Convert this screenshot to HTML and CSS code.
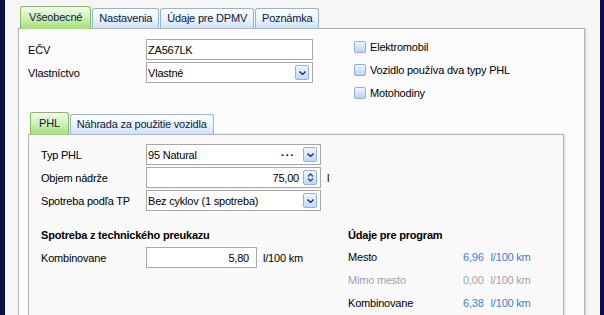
FILE: index.html
```html
<!DOCTYPE html>
<html lang="sk">
<head>
    <meta charset="UTF-8">
    <title>Vozidlo</title>
    <link rel="stylesheet" href="styles.css">
</head>
<body>
    <div class="screen">
        <div class="edge"></div>

        <div class="window">
            <!-- Main tabs -->
            <div class="tabs">
                <div class="tab active">Všeobecné</div>
                <div class="tab">Nastavenia</div>
                <div class="tab">Údaje pre DPMV</div>
                <div class="tab">Poznámka</div>
            </div>

            <div class="panel">
                <div class="top">
                    <div class="fields">
                        <div class="row">
                            <span class="label">EČV</span>
                            <div class="input wide">ZA567LK</div>
                        </div>
                        <div class="row">
                            <span class="label">Vlastníctvo</span>
                            <div class="input wide">
                                <span class="value">Vlastné</span>
                                <span class="btn"><svg width="7" height="4" viewBox="0 0 7 4"><path d="M0.5 0.5 L3.5 3.5 L6.5 0.5" fill="none" stroke="#24487f" stroke-width="1.6"/></svg></span>
                            </div>
                        </div>
                    </div>

                    <div class="checks">
                        <div class="check"><span class="box"></span>Elektromobil</div>
                        <div class="check"><span class="box"></span>Vozidlo používa dva typy PHL</div>
                        <div class="check"><span class="box"></span>Motohodiny</div>
                    </div>
                </div>

                <!-- Inner tabs -->
                <div class="subtabs">
                    <div class="tab active">PHL</div>
                    <div class="tab">Náhrada za použitie vozidla</div>
                </div>

                <div class="subpanel">
                    <div class="row">
                        <span class="label">Typ PHL</span>
                        <div class="input fuel">
                            <span class="value">95 Natural</span>
                            <span class="dots">···</span>
                            <span class="btn"><svg width="7" height="4" viewBox="0 0 7 4"><path d="M0.5 0.5 L3.5 3.5 L6.5 0.5" fill="none" stroke="#24487f" stroke-width="1.6"/></svg></span>
                        </div>
                    </div>
                    <div class="row">
                        <span class="label">Objem nádrže</span>
                        <div class="input fuel number">
                            <span class="value">75,00</span>
                            <span class="btn spin"><svg width="7" height="9" viewBox="0 0 7 9"><path d="M1 3.5 L3.5 1 L6 3.5 M1 5.5 L3.5 8 L6 5.5" fill="none" stroke="#24487f" stroke-width="1.4"/></svg></span>
                        </div>
                        <span class="unit">l</span>
                    </div>
                    <div class="row">
                        <span class="label">Spotreba podľa TP</span>
                        <div class="input fuel">
                            <span class="value">Bez cyklov (1 spotreba)</span>
                            <span class="btn"><svg width="7" height="4" viewBox="0 0 7 4"><path d="M0.5 0.5 L3.5 3.5 L6.5 0.5" fill="none" stroke="#24487f" stroke-width="1.6"/></svg></span>
                        </div>
                    </div>

                    <div class="consumption">
                        <div class="col-tp">
                            <h3>Spotreba z technického preukazu</h3>
                            <div class="row">
                                <span class="label">Kombinovane</span>
                                <div class="input short number"><span class="value">5,80</span></div>
                                <span class="unit">l/100 km</span>
                            </div>
                        </div>

                        <div class="col-program">
                            <h3>Údaje pre program</h3>
                            <div class="stats">
                                <span>Mesto</span><span class="num">6,96</span><span class="num">l/100 km</span>
                                <span class="off">Mimo mesto</span><span class="off">0,00</span><span class="off">l/100 km</span>
                                <span>Kombinovane</span><span class="num">6,38</span><span class="num">l/100 km</span>
                            </div>
                        </div>
                    </div>
                </div>
            </div>
        </div>

        <div class="edge right"></div>
    </div>
</body>
</html>
```

FILE: styles.css
```css
/* Page */
body {
    margin: 0;
    font-family: "Liberation Sans", Arial, sans-serif;
    font-size: 11px;
    letter-spacing: -0.2px;
    color: #000;
}

.screen {
    display: flex;
    height: 315px;
    overflow: hidden;
}

.edge {
    width: 5px;
    background: #0b0d48;
}

.edge.right {
    width: 4px;
}

.window {
    flex: 1;
    background: #f6f6f6;
    padding: 6px 0 0 13px;
}

/* Tabs */
.tabs,
.subtabs {
    display: flex;
    align-items: flex-end;
    height: 22px;
    padding-left: 2px;
}

.tab {
    height: 19px;
    line-height: 19px;
    padding: 0 6px;
    margin-right: 1px;
    border: 1px solid #93b5dc;
    border-bottom: none;
    border-radius: 3px 3px 0 0;
    background: linear-gradient(#fdfeff, #e9f2fc 55%, #cfe2f7);
    color: #0c1a3a;
}

.tab.active {
    position: relative;
    z-index: 1;
    height: 22px;
    line-height: 21px;
    margin-bottom: -1px;
    padding: 0 8px;
    border-color: #82bf56;
    background: linear-gradient(#f4fbee, #d4f0bd 45%, #a4de76);
}

/* Panels */
.panel {
    width: 567px;
    height: 300px;
    border: 1px solid #b4b4b4;
    background: #fcfcfc;
    box-shadow: 1px 1px 2px rgba(0, 0, 0, 0.18);
    padding: 10px 0 0 9px;
    box-sizing: border-box;
}

.top {
    display: flex;
}

.row {
    display: flex;
    align-items: center;
    height: 21px;
    margin-bottom: 2px;
}

.fields .label {
    width: 118px;
}

.input {
    display: flex;
    align-items: center;
    height: 21px;
    box-sizing: border-box;
    border: 1px solid #a7a7a7;
    background: #fff;
    padding: 0 3px 0 1px;
}

.input .value {
    flex: 1;
}

.input.number .value {
    text-align: right;
    padding-right: 4px;
}

.input.wide {
    width: 167px;
}

.btn {
    display: flex;
    align-items: center;
    justify-content: center;
    width: 12px;
    height: 13px;
    border: 1px solid #8fb2df;
    border-radius: 2px;
    background: linear-gradient(#f0f6fd, #c3d9f4);
}

.dots {
    margin-right: 8px;
    font-weight: bold;
    letter-spacing: 1px;
}

/* Checkboxes */
.checks {
    margin: -4px 0 0 41px;
}

.check {
    display: flex;
    align-items: center;
    height: 23px;
}

.box {
    width: 10px;
    height: 10px;
    margin-right: 4px;
    border: 1px solid #8aaedb;
    border-radius: 2px;
    background: linear-gradient(#eef4fc, #bcd4f2);
}

.subtabs {
    margin-top: 8px;
}

.subpanel {
    width: 536px;
    height: 200px;
    box-sizing: border-box;
    border: 1px solid #b4b4b4;
    background: #f9f9f9;
    box-shadow: 1px 0 2px rgba(0, 0, 0, 0.15);
    padding: 9px 0 0 12px;
}

.subpanel .label {
    width: 105px;
}

.input.fuel {
    width: 175px;
}

.input.short {
    width: 111px;
}

.unit {
    margin-left: 6px;
}

/* Consumption */
.consumption {
    display: flex;
    margin-top: 17px;
}

.col-tp {
    width: 307px;
}

h3 {
    margin: 0 0 5px;
    font-size: 11px;
    line-height: 14px;
}

.stats {
    display: grid;
    grid-template-columns: 108px auto auto;
    justify-content: start;
    column-gap: 7px;
    grid-auto-rows: 23px;
    align-items: center;
    margin-top: -2px;
}

.num {
    color: #3a7ed6;
}

.off {
    color: #a3a3ab;
}
```
